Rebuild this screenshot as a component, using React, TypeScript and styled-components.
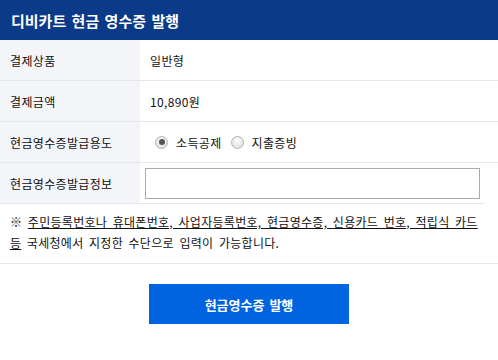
import React from "react";
import styled, { createGlobalStyle } from "styled-components";

const Global = createGlobalStyle`
  html, body { margin: 0; padding: 0; background: #fff; }
  body { font-family: "Noto Sans CJK KR", "Noto Sans", sans-serif; color: #111; }
  * { box-sizing: border-box; }
`;

const Wrap = styled.div`
  width: 498px;
`;

const Header = styled.div`
  height: 40px;
  background: #0b3a89;
  color: #fff;
  font-size: 15px;
  font-weight: 700;
  display: flex;
  align-items: center;
  padding-left: 11px;
  word-spacing: 2px;
`;

const Row = styled.div<{ $h?: number; $short?: boolean }>`
  display: grid;
  grid-template-columns: 140px 1fr;
  height: ${(p) => p.$h ?? 41}px;
  border-bottom: 1px solid #e4e6eb;
  margin-right: ${(p) => (p.$short ? 13 : 0)}px;
`;

const Label = styled.div`
  background: #f3f5f9;
  display: flex;
  align-items: center;
  padding-left: 10px;
  font-size: 12px;
  letter-spacing: 0.35px;
`;

const Value = styled.div`
  display: flex;
  align-items: center;
  padding-left: 10px;
  font-size: 12px;
  letter-spacing: 0.35px;
`;

const RadioGroup = styled.label`
  display: flex;
  align-items: center;
  margin-right: 4px;
  padding-left: 5px;
`;

const Radio = styled.span<{ $checked?: boolean }>`
  width: 13px;
  height: 13px;
  border-radius: 50%;
  border: 1px solid #b4b4b4;
  background: radial-gradient(circle at 50% 35%, #fdfdfd, #d8d8d8);
  margin-right: 8px;
  display: inline-flex;
  align-items: center;
  justify-content: center;
  &::after {
    content: "";
    display: ${(p) => (p.$checked ? "block" : "none")};
    width: 6px;
    height: 6px;
    border-radius: 50%;
    background: #555;
  }
`;

const Input = styled.input`
  width: 335px;
  height: 31px;
  border: 1px solid #a9a9a9;
  margin-left: -5px;
  outline: none;
`;

const Note = styled.div`
  font-size: 12px;
  line-height: 21px;
  padding: 7px 6px 10px 10px;
  border-bottom: 1px solid #e4e6eb;
  letter-spacing: 0.3px;
  word-spacing: 2.5px;
  word-break: keep-all;
`;

const U = styled.span`
  text-decoration: underline;
`;

const ButtonBar = styled.div`
  display: flex;
  justify-content: center;
  padding-top: 20px;
`;

const Button = styled.button`
  width: 200px;
  height: 40px;
  border: none;
  background: #0064e0;
  color: #fff;
  font-family: "Noto Sans CJK KR", sans-serif;
  font-size: 13px;
  font-weight: 700;
  word-spacing: 2px;
`;

export default function App() {
  return (
    <Wrap>
      <Global />
      <Header>디비카트 현금 영수증 발행</Header>
      <Row>
        <Label>결제상품</Label>
        <Value>일반형</Value>
      </Row>
      <Row>
        <Label>결제금액</Label>
        <Value>10,890원</Value>
      </Row>
      <Row>
        <Label>현금영수증발급용도</Label>
        <Value>
          <RadioGroup>
            <Radio $checked />
            소득공제
          </RadioGroup>
          <RadioGroup>
            <Radio />
            지출증빙
          </RadioGroup>
        </Value>
      </Row>
      <Row $short>
        <Label>현금영수증발급정보</Label>
        <Value>
          <Input />
        </Value>
      </Row>
      <Note>
        ※ <U>주민등록번호나 휴대폰번호, 사업자등록번호, 현금영수증, 신용카드 번호, 적립식 카드 등</U> 국세청에서 지정한 수단으로 입력이 가능합니다.
      </Note>
      <ButtonBar>
        <Button>현금영수증 발행</Button>
      </ButtonBar>
    </Wrap>
  );
}
